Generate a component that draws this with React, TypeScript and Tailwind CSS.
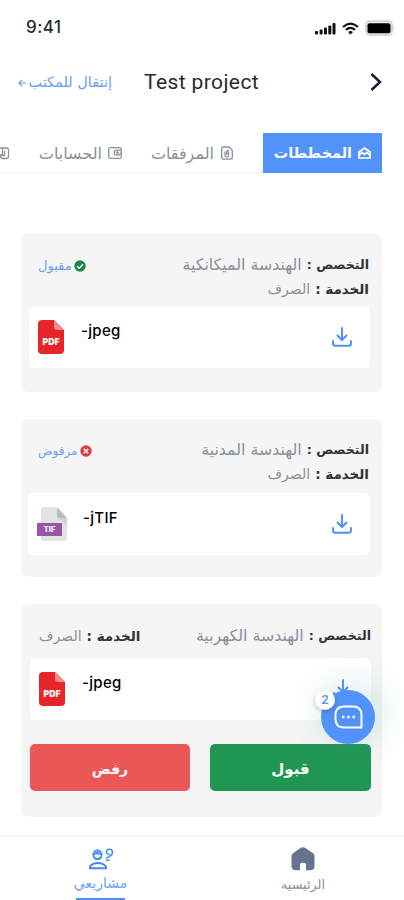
import React, { useState } from 'react';
import clsx from 'clsx';

interface Plan {
  id: number;
  major: string;
  service: string;
  file: string;
  type: 'pdf' | 'tif';
  status: 'accepted' | 'rejected' | 'pending';
}

const plans: Plan[] = [
  { id: 1, major: 'الهندسة الميكانكية', service: 'الصرف', file: '-jpeg', type: 'pdf', status: 'accepted' },
  { id: 2, major: 'الهندسة المدنية', service: 'الصرف', file: '-jTIF', type: 'tif', status: 'rejected' },
  { id: 3, major: 'الهندسة الكهربية', service: 'الصرف', file: '-jpeg', type: 'pdf', status: 'pending' },
];

const PdfIcon = () => (
  <svg className="h-[34px] w-[26px]" viewBox="0 0 26 34">
    <path d="M4 0H16L26 10V30Q26 34 22 34H4Q0 34 0 30V4Q0 0 4 0Z" fill="#e5252a" />
    <path d="M16 0L26 10H19Q16 10 16 7Z" fill="#f08a8c" />
    <text x="13" y="25.3" textAnchor="middle" fontSize="8.6" fontWeight="900" fontFamily="Inter, sans-serif" fill="#fff">PDF</text>
  </svg>
);

const TifIcon = () => (
  <svg className="h-[34px] w-[30px]" viewBox="0 0 30 34">
    <path d="M6 0H20L30 11V32Q30 34 28 34H6Q4 34 4 32V2Q4 0 6 0Z" fill="#dfe4e5" />
    <path d="M20 0L30 11H22Q20 11 20 9Z" fill="#b4bfc1" />
    <path d="M22 11H30V19Z" fill="#cbd3d5" />
    <rect x="0" y="16" width="25" height="13" fill="#9b55a8" />
    <text x="12.5" y="25.3" textAnchor="middle" fontSize="7.5" fontWeight="800" fontFamily="Inter, sans-serif" fill="#fff">TIF</text>
  </svg>
);

const DownloadIcon = () => (
  <svg className="h-5 w-5" viewBox="0 0 20 20" fill="none" stroke="#4c8ef7" strokeWidth="1.9" strokeLinecap="round" strokeLinejoin="round">
    <path d="M10 1V12.5M5.5 8.5L10 13L14.5 8.5" />
    <path d="M1 14V16.5Q1 18.8 3.5 18.8H16.5Q19 18.8 19 16.5V14" />
  </svg>
);

const StatusBar = () => (
  <div className="flex h-14 items-center justify-between pr-[9px] pl-[26px]">
    <span className="font-[Inter,sans-serif] text-[17px] font-medium tracking-[0.5px] text-[#2a2a2a]">9:41</span>
    <div className="flex items-center gap-[6px]">
      <svg className="h-[13px] w-[21px]" viewBox="0 0 21 13" fill="#111">
        <rect x="0" y="9" width="3" height="3.5" rx="1" />
        <rect x="4.6" y="7.5" width="3" height="5" rx="1" />
        <rect x="9" y="5.5" width="3" height="7" rx="1" />
        <rect x="13.3" y="3.5" width="3" height="9" rx="1" />
        <rect x="17.5" y="1" width="3" height="11.5" rx="1" />
      </svg>
      <svg className="h-[13px] w-[17px]" viewBox="0 0 17 13" fill="none" stroke="#111" strokeWidth="2.1">
        <path d="M1 5Q8.5 -1.8 16 5" />
        <path d="M3.9 7.9Q8.5 3.9 13.1 7.9" />
        <path d="M8.5 12.5L6 9.9Q8.5 8 11 9.9Z" fill="#111" stroke="none" />
      </svg>
      <svg className="h-4 w-[30px]" viewBox="0 0 30 16">
        <rect x="0.9" y="0.9" width="26.2" height="14.2" rx="4" fill="#eee" stroke="#d0d0d0" strokeWidth="1.5" />
        <rect x="2.5" y="3.2" width="23" height="10" rx="2" fill="#000" />
        <path d="M28.3 5.5Q30 8 28.3 10.5Z" fill="#aaa" />
      </svg>
    </div>
  </div>
);

const Header = () => (
  <div className="flex h-[52px] items-center">
    <button className="mt-[2px] ml-[18px] flex h-6 w-[94px] items-center gap-[3px] text-[#6c9ff8]">
      <svg className="h-2 w-2 shrink-0" viewBox="0 0 8 8" fill="none" stroke="currentColor" strokeWidth="1.2">
        <path d="M8 4H1M3.8 1L1 4L3.8 7" />
      </svg>
      <span dir="rtl" className="w-[83px] text-right text-[14.5px] whitespace-nowrap">إنتقال للمكتب</span>
    </button>
    <h1 className="mt-[2px] ml-[32px] w-[116px] font-[Roboto,sans-serif] text-[21px] tracking-[0.4px] whitespace-nowrap text-[#2a2a2a]">Test project</h1>
    <svg className="ml-[110px] h-5 w-3" viewBox="0 0 12 20" fill="none" stroke="#161b3d" strokeWidth="2.5">
      <path d="M1.5 2L10 10L1.5 18" />
    </svg>
  </div>
);

const Tabs = ({ tab, setTab }: { tab: string; setTab: (t: string) => void }) => (
  <div dir="rtl" className="mt-[25px] flex h-10 w-[404px] items-stretch overflow-hidden pr-[22px] text-[16px] text-[#8a909c]">
    <button
      onClick={() => setTab('plans')}
      className={clsx('flex w-[119px] shrink-0 items-center justify-center gap-[6px] font-bold', tab == 'plans' && 'bg-[#5192fb] text-white')}
    >
      <svg className="h-3 w-[13px] shrink-0" viewBox="0 0 13 12" fill="none" stroke="currentColor" strokeWidth="1.7">
        <path d="M1 5L6.5 1L12 5V11H1Z" />
        <path d="M1 8.5L4 5.5L6.5 7.5L9 5.5L12 8.5" />
      </svg>
      <span className="w-[78px] pt-[2px] text-right text-[14.4px] whitespace-nowrap">المخططات</span>
    </button>
    <button onClick={() => setTab('attachments')} className="flex w-[141px] shrink-0 items-center gap-[7px] border-b border-[#f1f1f4] pr-[30px]">
      <svg className="h-[14px] w-3 shrink-0" viewBox="0 0 12 14" fill="none" stroke="currentColor" strokeWidth="1.3">
        <path d="M2.5 1H8L11.3 4.5V11.5Q11.3 13.2 9.5 13.2H2.5Q0.7 13.2 0.7 11.5V2.8Q0.7 1 2.5 1Z" />
        <path d="M4 5.5V9.5Q4 11 5.8 11Q7.5 11 7.5 9.5V5.5Q7.5 4.5 6.5 4.5Q5.7 4.5 5.7 5.5V9" />
      </svg>
      <span className="pt-[2px] whitespace-nowrap">المرفقات</span>
    </button>
    <button onClick={() => setTab('accounts')} className="flex w-[112px] shrink-0 items-center gap-[6px] border-b border-[#f1f1f4]">
      <svg className="h-3 w-[14px] shrink-0" viewBox="0 0 14 12" fill="none" stroke="currentColor" strokeWidth="1.3">
        <path d="M2.2 0.7H11.5Q13.3 0.7 13.3 2.3V9.7Q13.3 11.3 11.5 11.3H2.2Q0.7 11.3 0.7 9.7V2.3Q0.7 0.7 2.2 0.7Z" />
        <path d="M13 3.2H9Q6.3 3.2 6.3 5.7Q6.3 8.2 9 8.2H11L13 6" />
        <circle cx="9.5" cy="5.7" r="0.7" />
      </svg>
      <span className="pt-[2px] whitespace-nowrap">الحسابات</span>
    </button>
    <div className="flex w-[10px] shrink-0 items-center border-b border-[#f1f1f4]">
      <svg className="h-[14px] w-[10px]" viewBox="0 0 10 14" fill="none" stroke="currentColor" strokeWidth="1.3">
        <path d="M0 2H6.5Q8.5 2 8.5 4V10.5Q8.5 12.5 6.5 12.5H2L0 10.5M2.5 2V9H0M4.500 5V9.500H0" />
      </svg>
    </div>
  </div>
);

const MajorField = ({ value }: { value: string }) => (
  <p className="flex h-6 items-center gap-[5px] whitespace-nowrap">
    <span className="text-[12.6px] font-bold text-[#333]">التخصص :</span>
    <span className="text-[15.8px] text-[#8a909c]">{value}</span>
  </p>
);

const ServiceField = ({ value }: { value: string }) => (
  <p className="flex h-6 items-center gap-[5px] whitespace-nowrap">
    <span className="text-[13.5px] font-bold text-[#333]">الخدمة :</span>
    <span className="text-[14px] text-[#8a909c]">{value}</span>
  </p>
);

const Status = ({ accepted }: { accepted: boolean }) => (
  <div className="flex h-[26px] items-center gap-[2px] text-[#6c9ff8]">
    <svg className="h-3 w-3" viewBox="0 0 12 12" fill="none" stroke="#fff" strokeWidth="1.5">
      <circle cx="6" cy="6" r="5.7" fill={accepted ? '#168b42' : '#e5393c'} stroke="none" />
      {accepted ? <path d="M3 6.2L5.2 8.3L9 4.2" /> : <path d="M3.8 3.8L8.2 8.2M8.2 3.8L3.8 8.2" />}
    </svg>
    <span className={clsx('whitespace-nowrap', accepted ? 'text-[13px]' : 'text-[12px]')}>{accepted ? 'مقبول' : 'مرفوض'}</span>
  </div>
);

const FileRow = ({ plan }: { plan: Plan }) => (
  <div className="flex h-[62px] items-center rounded-[5px] bg-white pr-[18px] pl-[9px]">
    {plan.type == 'pdf' ? <PdfIcon /> : <TifIcon />}
    <span
      className={clsx(
        'mb-[12px] h-6 font-[Inter,sans-serif] text-[15px] leading-6 font-medium tracking-[0.3px] text-black',
        plan.type == 'pdf' ? 'ml-[17px]' : 'ml-[16px]'
      )}
    >
      {plan.file}
    </span>
    <div className="ml-auto">
      <DownloadIcon />
    </div>
  </div>
);

const PlanCard = ({ plan }: { plan: Plan }) => {
  if (plan.status == 'pending') {
    return (
      <div className="h-[213px] rounded-[7px] bg-[#f5f5f5] pt-[20px] pr-[11px] pl-[9px]">
        <div dir="rtl" className="mb-[10px] flex justify-between pl-[9px]">
          <MajorField value={plan.major} />
          <ServiceField value={plan.service} />
        </div>
        <FileRow plan={plan} />
        <div className="mt-6 flex justify-between font-bold text-white">
          <button className="h-[47px] w-[160px] rounded-[5px] bg-[#eb5757] pt-[3px] text-[14px]">رفض</button>
          <button className="h-[47px] w-[161px] rounded-[5px] bg-[#219653] pt-[3px] text-[15px]">قبول</button>
        </div>
      </div>
    );
  }
  return (
    <div className={clsx('h-[158px] rounded-[7px] bg-[#f5f5f5] pt-[19px] pr-[12px]', plan.id == 1 ? 'pl-[8px]' : 'pl-[7px]')}>
      <div dir="rtl" className={clsx('flex justify-between pr-[1px]', plan.id == 1 ? 'mb-[5px] pl-[9px]' : 'mb-[7px] pl-[10px]')}>
        <div>
          <MajorField value={plan.major} />
          <ServiceField value={plan.service} />
        </div>
        <Status accepted={plan.status == 'accepted'} />
      </div>
      <FileRow plan={plan} />
    </div>
  );
};

const ChatButton = () => (
  <button className="absolute top-[690px] left-[321px] flex h-[54px] w-[54px] items-center justify-center rounded-full bg-[#5192fb] shadow-[4px_-4px_40px_rgba(70,160,180,0.28)]">
    <svg className="h-6 w-[29px]" viewBox="0 0 29 24" fill="none" stroke="#fff" strokeWidth="2">
      <path d="M10 1.5H19Q27.5 1.5 27.5 10V22.5H10Q1.5 22.5 1.5 14V10Q1.5 1.5 10 1.5Z" />
      <path d="M8 12H10.5M13.2 12H15.7M18.4 12H20.9" strokeWidth="2.4" />
    </svg>
    <span className="absolute top-0 -left-[6px] flex h-5 w-5 items-center justify-center rounded-full bg-white font-[Roboto,sans-serif] text-[13px] font-medium text-[#5192fb] shadow-[0_2px_5px_rgba(0,0,0,0.2)]">2</span>
  </button>
);

const BottomNav = () => (
  <div className="absolute bottom-0 left-0 flex h-[63px] w-full bg-white shadow-[0_-1px_4px_rgba(0,0,0,0.09)]">
    <div className="flex w-[203px] flex-col items-center pt-[11px] text-[#6c9ff8]">
      <svg className="h-[22px] w-[26px]" viewBox="0 0 26 22" fill="none" stroke="#4288f6" strokeWidth="1.9">
        <path d="M4.5 5.5H14.5M5.5 6V7Q5.5 11 9.5 11Q13.5 11 13.5 7V6M6 4L8 2.5M9.5 1V5M11 2.5L13 4" />
        <path d="M2 20.2H18V18.5Q15 15 10 15Q4.5 15 2 18.5Z" />
        <path d="M18.5 4Q18.3 1.3 21.3 1.3Q24.5 1.3 24.5 4.3Q24.5 7.3 21.3 8.3L18 10.5M18.5 4Q18.8 6.2 21.5 6.2M18 12.2H21.5" strokeWidth="1.5" />
      </svg>
      <span className="mt-[3px] h-5 text-[14px] leading-5">مشاريعي</span>
      <div className="mt-[5px] h-[2px] w-[49px] bg-[#4c8ef7]" />
    </div>
    <div className="ml-[1px] flex w-[202px] shrink-0 flex-col items-center pt-[10px] text-[#8a909c]">
      <svg className="h-6 w-6" viewBox="0 0 24 24" fill="#64748f">
        <path d="M9.5 0.9Q12 -0.6 14.5 0.9L22 6.2Q23.5 7.3 23.5 9.5V19Q23.5 23.3 19 23.3H15V18Q15 15.8 12 15.8Q9 15.8 9 18V23.3H5Q0.5 23.3 0.5 19V9.5Q0.5 7.3 2 6.2Z" />
      </svg>
      <span className="mt-[4px] h-5 text-[12.8px] leading-5">الرئيسيه</span>
    </div>
  </div>
);

const App = () => {
  const [tab, setTab] = useState('plans');
  return (
    <div className="relative h-[900px] w-[404px] overflow-hidden bg-white font-['DejaVu_Sans',sans-serif]">
      <StatusBar />
      <Header />
      <Tabs tab={tab} setTab={setTab} />
      <div className="mt-[61px] mr-[22px] ml-[21px] flex flex-col gap-[27px]">
        {plans.map((plan) => (
          <PlanCard key={plan.id} plan={plan} />
        ))}
      </div>
      <ChatButton />
      <BottomNav />
    </div>
  );
};

export default App;
